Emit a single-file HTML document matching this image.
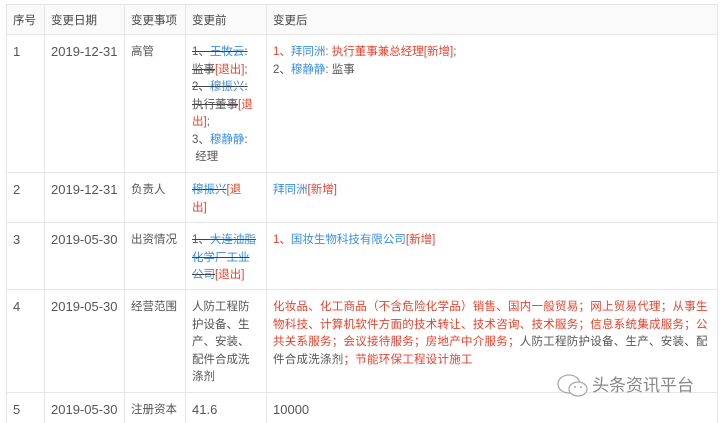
<!DOCTYPE html>
<html><head><meta charset="utf-8"><style>
*{margin:0;padding:0;box-sizing:border-box}
body{width:720px;height:423px;background:#fff;position:relative;overflow:hidden;font-family:"Liberation Sans","Noto Sans CJK SC",sans-serif;font-size:11.5px;color:#555;line-height:17.5px}
.h{position:absolute;background:#e6e6e6;height:1px}
.v{position:absolute;background:#e6e6e6;width:1px;top:4px;height:419px}
.c{position:absolute;white-space:nowrap}
.b{color:#3a8ee6}.r{color:#e8412c}.s{text-decoration:line-through;text-decoration-color:#444}
.hd{color:#444}
.n{font-size:13px}
</style></head><body>
<div style="position:absolute;left:6px;top:4px;width:711px;height:30px;background:#fafafa"></div>
<div class="h" style="left:6px;top:4px;width:711px"></div>
<div class="h" style="left:6px;top:34px;width:711px"></div>
<div class="h" style="left:6px;top:172px;width:711px"></div>
<div class="h" style="left:6px;top:222px;width:711px"></div>
<div class="h" style="left:6px;top:289px;width:711px"></div>
<div class="h" style="left:6px;top:392px;width:711px"></div>
<div class="v" style="left:6px"></div><div class="v" style="left:44px"></div><div class="v" style="left:124px"></div><div class="v" style="left:185px"></div><div class="v" style="left:266px"></div><div class="v" style="left:717px"></div>

<div class="c hd" style="left:13px;top:13px">序号</div>
<div class="c hd" style="left:51px;top:13px">变更日期</div>
<div class="c hd" style="left:131px;top:13px">变更事项</div>
<div class="c hd" style="left:192px;top:13px">变更前</div>
<div class="c hd" style="left:273px;top:13px">变更后</div>

<div class="c n" style="left:13px;top:43px">1</div>
<div class="c n" style="left:51px;top:43px">2019-12-31</div>
<div class="c" style="left:131px;top:44px">高管</div>
<div class="c" style="left:192px;top:44px"><span class="s">1、<span class="b">王牧云</span>:</span><br><span class="s">监事</span><span class="r">[退出]</span>;<br><span class="s">2、<span class="b">穆振兴</span>:</span><br><span class="s">执行董事</span><span class="r">[退</span><br><span class="r">出]</span>;<br>3、<span class="b">穆静静</span>:<br>&nbsp;经理</div>
<div class="c" style="left:273px;top:44px"><span class="r">1、</span><span class="b">拜同洲</span><span class="r">: 执行董事兼总经理[新增]</span>;<br>2、<span class="b">穆静静</span>: 监事</div>

<div class="c n" style="left:13px;top:181px">2</div>
<div class="c n" style="left:51px;top:181px">2019-12-31</div>
<div class="c" style="left:131px;top:182px">负责人</div>
<div class="c" style="left:192px;top:182px"><span class="b s">穆振兴</span><span class="r">[退<br>出]</span></div>
<div class="c" style="left:273px;top:182px"><span class="b">拜同洲</span><span class="r">[新增]</span></div>

<div class="c n" style="left:13px;top:231px">3</div>
<div class="c n" style="left:51px;top:231px">2019-05-30</div>
<div class="c" style="left:131px;top:232px">出资情况</div>
<div class="c" style="left:192px;top:232px"><span class="s">1、<span class="b">大连油脂</span></span><br><span class="s b">化学厂工业</span><br><span class="s b">公司</span><span class="r">[退出]</span></div>
<div class="c" style="left:273px;top:232px"><span class="r">1、</span><span class="b">国妆生物科技有限公司</span><span class="r">[新增]</span></div>

<div class="c n" style="left:13px;top:298px">4</div>
<div class="c n" style="left:51px;top:298px">2019-05-30</div>
<div class="c" style="left:131px;top:299px">经营范围</div>
<div class="c" style="left:192px;top:299px">人防工程防<br>护设备、生<br>产、安装、<br>配件合成洗<br>涤剂</div>
<div class="c r" style="left:273px;top:299px;letter-spacing:0.25px">化妆品、化工商品（不含危险化学品）销售、国内一般贸易；网上贸易代理；从事生<br>物科技、计算机软件方面的技术转让、技术咨询、技术服务；信息系统集成服务；公<br>共关系服务；会议接待服务；房地产中介服务；<span style="color:#555">人防工程防护设备、生产、安装、配</span><br><span style="color:#555">件合成洗涤剂</span>；节能环保工程设计施工</div>

<div class="c n" style="left:13px;top:401px">5</div>
<div class="c n" style="left:51px;top:401px">2019-05-30</div>
<div class="c" style="left:131px;top:402px">注册资本</div>
<div class="c n" style="left:192px;top:401px">41.6</div>
<div class="c n" style="left:273px;top:401px">10000</div>

<svg style="position:absolute;left:556px;top:373px" width="36" height="26" viewBox="0 0 36 26"><ellipse cx="13" cy="11" rx="11" ry="9" fill="none" stroke="#aaa" stroke-width="1.3"/><ellipse cx="22" cy="16" rx="9" ry="7" fill="#fff" stroke="#aaa" stroke-width="1.3"/><circle cx="19" cy="14" r="1" fill="#aaa"/><circle cx="25" cy="14" r="1" fill="#aaa"/></svg>
<div class="c" style="left:592px;top:376px;font-size:17px;line-height:20px;color:#888">头条资讯平台</div>
</body></html>
